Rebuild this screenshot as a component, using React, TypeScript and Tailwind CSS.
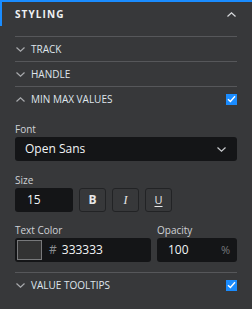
import React, { FC } from "react";

const Chevron: FC<{ up?: boolean; className?: string }> = ({ up, className }) => (
  <svg width="9" height="5" viewBox="0 0 9 5" className={className} fill="none">
    <path
      d={up ? "M0.5 4.5L4.5 0.8L8.5 4.5" : "M0.5 0.5L4.5 4.2L8.5 0.5"}
      stroke="currentColor"
      strokeWidth="1.2"
    />
  </svg>
);

const Check: FC = () => (
  <div className="w-[11px] h-[11px] bg-[#1a8cff] flex items-center justify-center">
    <svg width="9" height="8" viewBox="0 0 9 8" fill="none">
      <path d="M1 4.2L3.4 6.4L8 1.2" stroke="white" strokeWidth="1.4" />
    </svg>
  </div>
);

interface RowProps {
  label: string;
  open?: boolean;
  checked?: boolean;
}

const SectionRow: FC<RowProps> = ({ label, open, checked }) => (
  <div className="border-t border-[#56575a] h-[25px] flex items-center">
    <Chevron up={open} className="text-[#a9abae] ml-[1px]" />
    <span className="ml-[6px] text-[10px] text-[#dfe5ec]">{label}</span>
    {checked && (
      <div className="ml-auto">
        <Check />
      </div>
    )}
  </div>
);

const Label: FC<{ children: React.ReactNode }> = ({ children }) => (
  <div className="text-[10px] leading-[16px] text-[#cfd2d6]">{children}</div>
);

const StyleButton: FC<{ children: React.ReactNode; className?: string }> = ({ children, className }) => (
  <div
    className={
      "w-[27px] h-[24px] rounded-[3px] border border-[#222325] flex items-center justify-center text-[#e8e8e8] " +
      (className || "")
    }
  >
    {children}
  </div>
);

export default function App() {
  return (
    <div
      className="w-[252px] h-[309px] bg-[#37383a] border-t-2 border-[#1a8cff] overflow-hidden"
      style={{ fontFamily: '"Open Sans", sans-serif' }}
    >
      <div className="h-[24px] flex items-center border-l-2 border-[#1a8cff] pl-[13px] pr-[16px]">
        <span className="text-[10px] font-bold tracking-[1.1px] text-[#eef1f4]">STYLING</span>
        <Chevron up className="ml-auto text-[#d8dadd]" />
      </div>

      <div className="px-[15px] pt-[10px]">
        <SectionRow label="TRACK" />
        <SectionRow label="HANDLE" />
        <SectionRow label="MIN MAX VALUES" open checked />

        <div className="pt-[10px]">
          <Label>Font</Label>
          <div className="h-[24px] bg-[#141517] rounded-[3px] flex items-center pl-[10px] pr-[11px] text-[12px] text-[#f2f4f6]">
            <span>Open Sans</span>
            <Chevron className="ml-auto text-[#c9cbce]" />
          </div>

          <div className="mt-[11px]">
            <Label>Size</Label>
            <div className="flex gap-[6px]">
              <div className="w-[58px] h-[24px] bg-[#141517] rounded-[3px] flex items-center pl-[12px] text-[12px] text-[#f2f4f6]">
                15
              </div>
              <StyleButton className="font-bold text-[12px]">B</StyleButton>
              <StyleButton className="italic text-[12px]">
                <span style={{ fontFamily: '"Liberation Serif", serif' }}>I</span>
              </StyleButton>
              <StyleButton className="text-[11px]">
                <span className="underline underline-offset-2">U</span>
              </StyleButton>
            </div>
          </div>

          <div className="mt-[10px] flex gap-[6px]">
            <div className="w-[136px]">
              <Label>Text Color</Label>
              <div className="h-[24px] bg-[#141517] rounded-[3px] flex items-center pl-[2px]">
                <div className="w-[25px] h-[20px] bg-[#333333] border border-[#78797b]" />
                <span className="ml-[7px] text-[12px] text-[#8a8d91]">#</span>
                <span className="ml-[5px] text-[12px] text-[#f2f4f6]">333333</span>
              </div>
            </div>
            <div className="flex-1">
              <Label>Opacity</Label>
              <div className="h-[24px] bg-[#141517] rounded-[3px] flex items-center pl-[11px] pr-[7px] text-[12px] text-[#f2f4f6]">
                <span>100</span>
                <span className="ml-auto text-[11px] text-[#777a7e]">%</span>
              </div>
            </div>
          </div>
        </div>

        <div className="mt-[10px]">
          <SectionRow label="VALUE TOOLTIPS" checked />
        </div>
      </div>
    </div>
  );
}
